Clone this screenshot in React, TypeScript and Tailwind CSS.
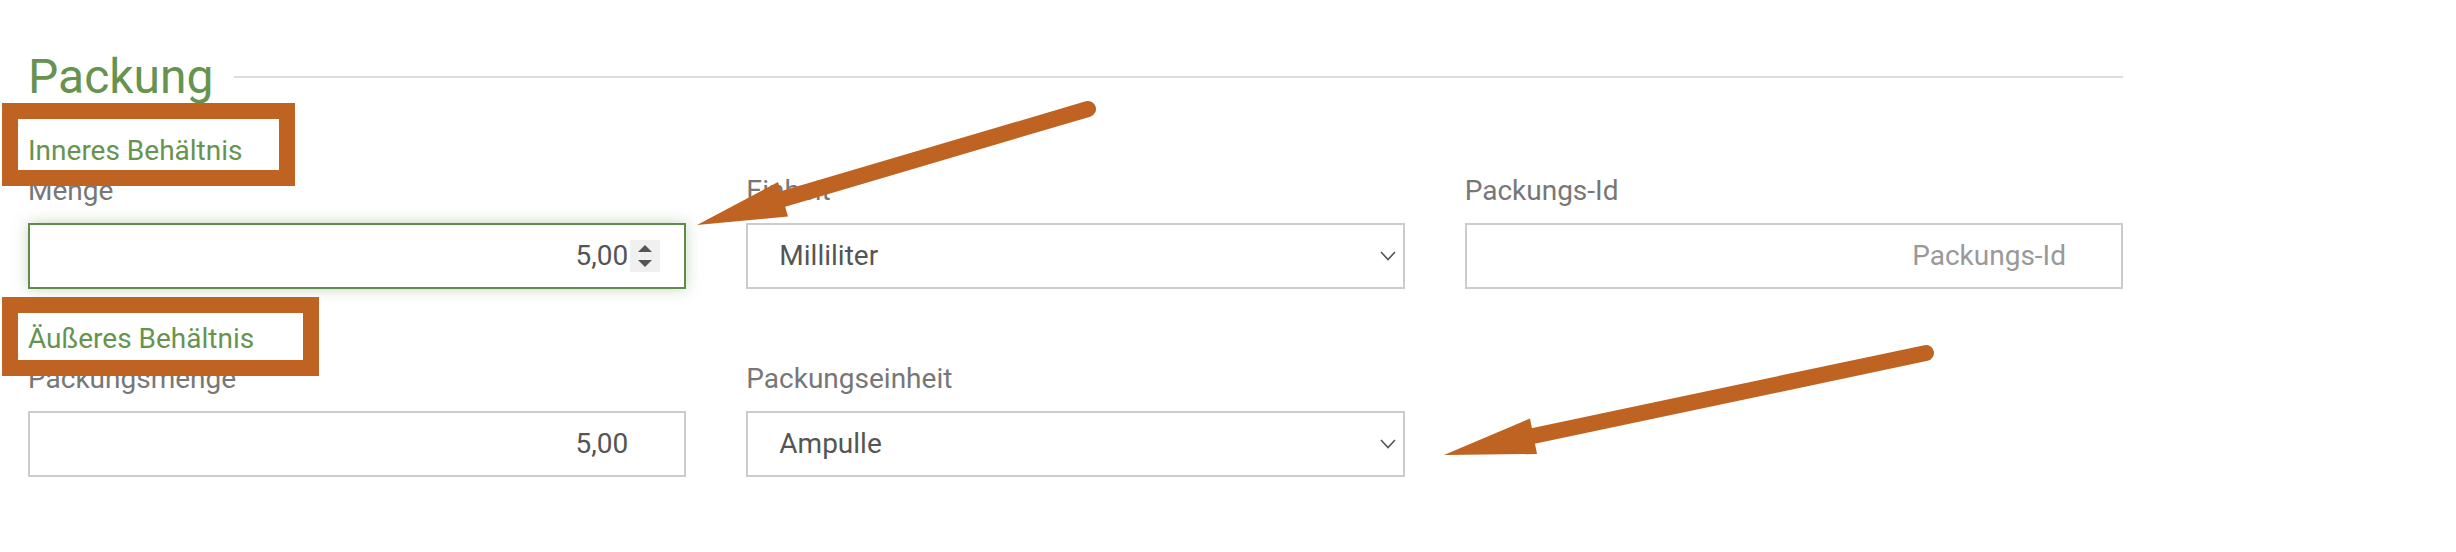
import React from 'react';

type FieldProps = {
    label: string;
    children: React.ReactNode;
};

const Field = ({ label, children }: FieldProps) => (
    <div className="flex flex-col">
        <label className="text-[28px] leading-[40px] text-[#777777]">{label}</label>
        <div className="mt-[12px]">{children}</div>
    </div>
);

const Spinner = () => (
    <div className="flex h-[32px] w-[30px] flex-col items-center justify-center gap-[8px] bg-[#f0f0f0]">
        <svg width="14" height="7" viewBox="0 0 14 7">
            <polygon points="7,0 14,7 0,7" fill="#555555" />
        </svg>
        <svg width="14" height="7" viewBox="0 0 14 7">
            <polygon points="0,0 14,0 7,7" fill="#555555" />
        </svg>
    </div>
);

const NumberBox = ({ value, focused }: { value: string; focused?: boolean }) => (
    <div
        className={
            focused
                ? 'flex h-[66px] items-center justify-end gap-[2px] border-2 border-[#5f8c4b] bg-white pr-[24px] text-[28px] leading-[40px] text-[#555555] shadow-[0_0_14px_rgba(95,140,75,0.35)]'
                : 'flex h-[66px] items-center justify-end gap-[2px] border-2 border-[#cccccc] bg-white pr-[24px] text-[28px] leading-[40px] text-[#555555]'
        }
    >
        <span>{value}</span>
        {focused ? <Spinner /> : <span className="w-[30px]" />}
    </div>
);

const SelectBox = ({ value }: { value: string }) => (
    <div className="flex h-[66px] items-center justify-between border-2 border-[#cccccc] bg-white pl-[31px] pr-[7px] text-[28px] leading-[40px] text-[#555555]">
        <span>{value}</span>
        <svg width="16" height="10" viewBox="0 0 16 10" fill="none">
            <polyline points="1,1 8,8.5 15,1" stroke="#555555" strokeWidth="1.6" />
        </svg>
    </div>
);

const Arrows = () => (
    <svg className="pointer-events-none absolute left-0 top-0" width="2456" height="552" viewBox="0 0 2456 552">
        <g fill="#be6321" stroke="#be6321">
            <line x1="1088" y1="109" x2="783" y2="199" strokeWidth="16" strokeLinecap="round" />
            <polygon points="697,225 778,182 788,216.5" stroke="none" />
            <line x1="1926" y1="353" x2="1533" y2="436" strokeWidth="16" strokeLinecap="round" />
            <polygon points="1444,455 1530,418.5 1537,454" stroke="none" />
        </g>
    </svg>
);

export default function App() {
    return (
        <div className="relative h-[552px] w-[2456px] overflow-hidden bg-white font-['Roboto','Liberation_Sans',sans-serif]">
            <div className="pl-[28px] pr-[333px] pt-[53px]">
                <div className="flex h-[48px] items-center gap-[20px]">
                    <h2 className="text-[48px] leading-[48px] font-normal text-[#66944f]">Packung</h2>
                    <div className="h-[2px] flex-1 bg-[#dddddd]" />
                </div>

                <h3 className="mt-[30px] text-[28px] leading-[40px] text-[#66944f]">Inneres Behältnis</h3>
                <div className="grid grid-cols-3 gap-x-[60px]">
                    <Field label="Menge">
                        <NumberBox value="5,00" focused />
                    </Field>
                    <Field label="Einheit">
                        <SelectBox value="Milliliter" />
                    </Field>
                    <Field label="Packungs-Id">
                        <div className="flex h-[66px] items-center justify-end border-2 border-[#cccccc] bg-white pr-[55px] text-[28px] leading-[40px] text-[#999999]">
                            Packungs-Id
                        </div>
                    </Field>
                </div>

                <h3 className="mt-[30px] text-[28px] leading-[40px] text-[#66944f]">Äußeres Behältnis</h3>
                <div className="grid grid-cols-3 gap-x-[60px]">
                    <Field label="Packungsmenge">
                        <NumberBox value="5,00" />
                    </Field>
                    <Field label="Packungseinheit">
                        <SelectBox value="Ampulle" />
                    </Field>
                    <div />
                </div>
            </div>

            {/* annotation marks drawn over the form */}
            <div className="pointer-events-none absolute left-[2px] top-[103px] h-[83px] w-[293px] border-[16px] border-[#be6321]" />
            <div className="pointer-events-none absolute left-[2px] top-[297px] h-[79px] w-[317px] border-[16px] border-[#be6321]" />
            <Arrows />
        </div>
    );
}
